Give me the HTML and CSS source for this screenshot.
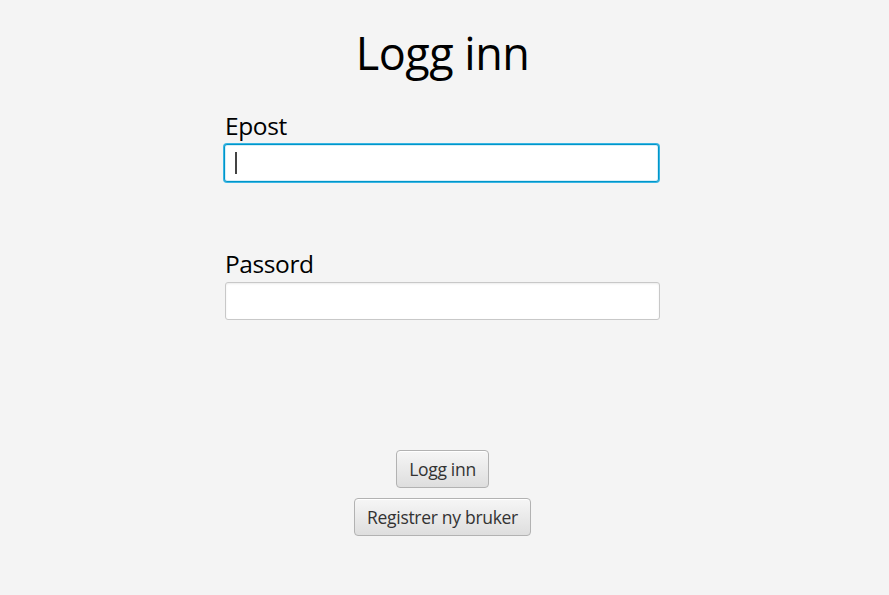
FILE: index.html
```html
<!DOCTYPE html>
<html lang="no">
<head>
<meta charset="utf-8">
<title>Logg inn</title>
<link rel="stylesheet" href="styles.css">
</head>
<body>
<main class="page">
  <h1 class="title">Logg inn</h1>
  <form class="form">
    <div class="field">
      <label class="label" for="epost">Epost</label>
      <div class="input focused" id="epost"><span class="caret"></span></div>
    </div>
    <div class="field field-pass">
      <label class="label" for="passord">Passord</label>
      <div class="input" id="passord"></div>
    </div>
    <div class="actions">
      <button type="button" class="btn">Logg inn</button>
      <button type="button" class="btn">Registrer ny bruker</button>
    </div>
  </form>
</main>
</body>
</html>
```
FILE: styles.css
```css
* { box-sizing: border-box; }
html, body { margin: 0; padding: 0; }
body {
  background: #f4f4f4;
  font-family: "Open Sans", "Noto Sans", sans-serif;
  color: #000;
  width: 889px;
  height: 595px;
  overflow: hidden;
}
.page {
  display: flex;
  flex-direction: column;
  align-items: center;
  padding-top: 22px;
  padding-right: 4px;
}
.title {
  margin: 0;
  font-weight: 400;
  font-size: 45px;
  line-height: 62px;
  letter-spacing: -0.5px;
}
.form {
  width: 435px;
  display: flex;
  flex-direction: column;
  margin-top: 27px;
}
.field {
  display: flex;
  flex-direction: column;
}
.field-pass { margin-top: 67px; }
.label {
  font-size: 24.5px;
  line-height: 30px;
  letter-spacing: -0.4px;
  margin-bottom: 3px;
}
.input {
  height: 38px;
  background: #fff;
  border: 1px solid #c8c8c8;
  border-radius: 3px;
  box-shadow: inset 0 1px 2px rgba(0,0,0,0.08);
  display: flex;
  align-items: center;
  padding-left: 10px;
}
.input.focused {
  border: 1px solid #0096c9;
  box-shadow: 0 0 0 1px #39b5e3, inset 0 0 0 1px #d6eef8;
  margin-left: -1px;
  margin-right: 1px;
}
.caret {
  width: 2px;
  height: 22px;
  background: #444;
}
.actions {
  display: flex;
  flex-direction: column;
  align-items: center;
  gap: 10px;
  margin-top: 130px;
}
.btn {
  font-family: "Open Sans", "Noto Sans", sans-serif;
  font-size: 17.5px;
  letter-spacing: -0.3px;
  color: #333;
  height: 38px;
  padding: 0 12px;
  border: 1px solid #b2b2b2;
  border-radius: 4px;
  background: linear-gradient(#f6f6f6, #dedede);
  box-shadow: inset 0 1px 0 #fff;
  cursor: pointer;
}
```
